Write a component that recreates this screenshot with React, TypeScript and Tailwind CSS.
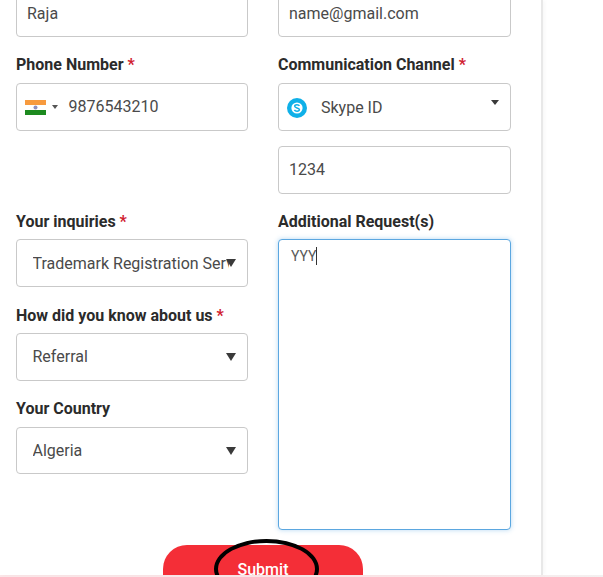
import React from "react";

const Req = () => <span className="text-[#d0202f]"> *</span>;

const Label = ({ children, className = "" }: { children: React.ReactNode; className?: string }) => (
  <label className={`block text-[16px] leading-[19px] font-bold text-[#2b2b2b] ${className}`}>{children}</label>
);

const Caret = ({ w = 10, h = 8 }: { w?: number; h?: number }) => (
  <svg width={w} height={h} viewBox="0 0 10 8" preserveAspectRatio="none" className="shrink-0">
    <path d="M0 0h10L5 8z" fill="#3a3a3a" />
  </svg>
);

const boxClass =
  "h-12 w-full rounded border border-[#c9c9c9] bg-white flex items-center text-[16px] text-[#4a4a4a]";

const TextBox = ({ value, className = "" }: { value: string; className?: string }) => (
  <div className={`${boxClass} px-[10px] ${className}`}>{value}</div>
);

const SelectBox = ({ value, className = "" }: { value: string; className?: string }) => (
  <div className={`${boxClass} pl-[15.5px] pr-3 relative overflow-hidden ${className}`}>
    <span className="whitespace-nowrap overflow-hidden w-[196px]">{value}</span>
    <span className="absolute right-[11px] top-[19px] flex">
      <Caret />
    </span>
  </div>
);

const IndiaFlag = () => (
  <svg width="21" height="15" viewBox="0 0 21 15" className="shrink-0">
    <rect width="21" height="5" fill="#f79a3e" />
    <rect y="5" width="21" height="5" fill="#ffffff" />
    <rect y="10" width="21" height="5" fill="#1d8a1f" />
    <circle cx="10.5" cy="7.5" r="2" fill="#8d8fc0" />
  </svg>
);

const SkypeIcon = () => (
  <svg width="20" height="20" viewBox="0 0 20 20" className="shrink-0">
    <circle cx="10" cy="10" r="10" fill="#0fb0e8" />
    <circle cx="10" cy="10" r="5.6" fill="#ffffff" />
    <path
      d="M12.4 7.9C12 7 11.1 6.7 10 6.7c-1.4 0-2.3.7-2.3 1.6 0 2 4.7 1.2 4.7 3.3 0 1-1 1.7-2.4 1.7-1.2 0-2.1-.4-2.6-1.4"
      fill="none"
      stroke="#0fb0e8"
      strokeWidth="1.5"
    />
  </svg>
);

export default function App() {
  return (
    <div className="h-[577px] w-[603px] overflow-hidden bg-white font-['Roboto',sans-serif] flex flex-col">
      <div className="h-[575px] w-[543px] shrink-0 overflow-hidden border-r-2 border-[#e8e8e8] shadow-[2px_0_4px_rgba(0,0,0,0.03)] relative">
        <div className="-mt-[11px] pl-4 pr-[30px] grid grid-cols-[232px_233px] gap-x-[30px]">
          <div>
            <TextBox value="Raja" className="pt-[2px]" />
            <Label className="mt-[18px] mb-[9px]">
              Phone Number
              <Req />
            </Label>
            <div className={`${boxClass} pl-[7.5px] pr-3`}>
              <IndiaFlag />
              <span className="ml-[6px] mr-[11px] w-0 h-0 border-x-[3px] border-x-transparent border-t-[4px] border-t-[#555]" />
              <span>9876543210</span>
            </div>
            <Label className="mt-[81px] mb-[8px]">
              Your inquiries
              <Req />
            </Label>
            <SelectBox value="Trademark Registration Services" className="pt-[2px]" />
            <Label className="mt-[19px] mb-[8px]">
              How did you know about us
              <Req />
            </Label>
            <SelectBox value="Referral" />
            <Label className="mt-[18px] mb-[9px]">Your Country</Label>
            <SelectBox value="Algeria" className="h-[47px]" />
          </div>
          <div>
            <TextBox value="name@gmail.com" className="pt-[2px]" />
            <Label className="mt-[18px] mb-[9px]">
              Communication Channel
              <Req />
            </Label>
            <div className={`${boxClass} pl-2 pt-[2px] relative`}>
              <SkypeIcon />
              <span className="ml-[14px]">Skype ID</span>
              <span className="absolute right-[11px] top-[16px] flex">
                <Caret w={8} h={5} />
              </span>
            </div>
            <div className="mt-[15px]">
              <TextBox value="1234" />
            </div>
            <Label className="mt-[18px] mb-[8px]">Additional Request(s)</Label>
            <div className="h-[291px] w-full rounded border border-[#5ba7e0] shadow-[0_0_5px_rgba(91,167,224,0.45)] bg-white px-3 pt-[7px] text-[14px] leading-[18px] text-[#5a5a5a] flex items-start">
              <span>YYY</span>
              <span className="w-px h-[18px] bg-[#333]" />
            </div>
          </div>
        </div>
        <div className="mt-[15px] w-[200px] ml-[163px] h-12 rounded-t-[24px] bg-[#f42e37] flex justify-center pt-[13px] text-[16px] font-medium text-white">
          Submit
        </div>
        <div className="absolute left-[214px] top-[539px] w-[105px] h-[60px] rounded-[50%] border-[4px] border-black" />
      </div>
      <div className="h-[2px] bg-gradient-to-r from-[#fbe6e8] from-70% to-[#f3f0f0]" />
    </div>
  );
}
